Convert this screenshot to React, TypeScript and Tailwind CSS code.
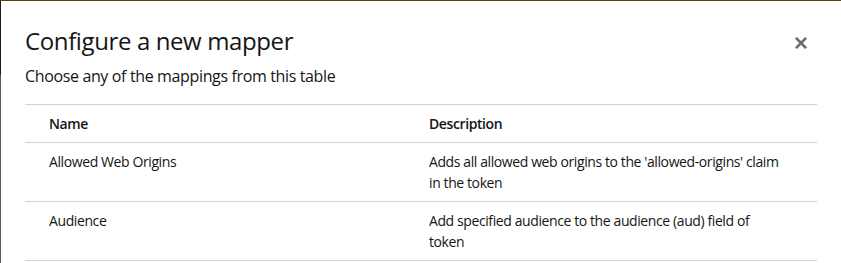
import React from "react";

const rows = [
  {
    name: "Allowed Web Origins",
    desc: "Adds all allowed web origins to the 'allowed-origins' claim in the token",
  },
  {
    name: "Audience",
    desc: "Add specified audience to the audience (aud) field of token",
  },
];

export default function App() {
  return (
    <div className="w-[841px] h-[263px] overflow-hidden bg-white" style={{ fontFamily: '"Open Sans", sans-serif' }}>
      <div className="h-[1px] bg-[#5c4200]" />
      <div className="flex">
        <div className="w-[1px] flex flex-col">
          <div className="h-[74px] bg-[#1a1a1a]" />
          <div className="h-[188px] bg-[#595959]" />
        </div>
        <div className="flex-1 bg-white pt-6 pl-6 pr-6">
          <div className="flex items-start justify-between">
            <div className="flex flex-col">
              <h1 className="text-[24px] leading-[31px] tracking-[-0.38px] text-[#151515]">
                Configure a new mapper
              </h1>
              <p className="mt-2 text-[16px] leading-[24px] tracking-[-0.36px] text-[#151515]">
                Choose any of the mappings from this table
              </p>
            </div>
            <button className="mt-[12px] mr-[10px] w-[12px] h-[12px] flex items-center justify-center text-[#6a6e73]">
              <svg width="12" height="12" viewBox="0 0 10 10">
                <path d="M1.5 1.5 L8.5 8.5 M8.5 1.5 L1.5 8.5" stroke="currentColor" strokeWidth="2.2" strokeLinecap="square" />
              </svg>
            </button>
          </div>
          <div className="mt-4 border-t border-[#d2d2d2] text-[14px] leading-[21px] tracking-[-0.4px] text-[#151515]">
            <div className="grid grid-cols-[388px_404px] border-b border-[#d2d2d2]">
              <div className="pl-6 pr-4 py-2 font-semibold">Name</div>
              <div className="pl-4 pr-6 py-2 font-semibold">Description</div>
            </div>
            {rows.map((r) => (
              <div key={r.name} className="grid grid-cols-[388px_404px] border-b border-[#d2d2d2]">
                <div className="pl-6 pr-4 py-2">{r.name}</div>
                <div className="pl-4 pr-[34px] py-2">{r.desc}</div>
              </div>
            ))}
          </div>
        </div>
      </div>
    </div>
  );
}
